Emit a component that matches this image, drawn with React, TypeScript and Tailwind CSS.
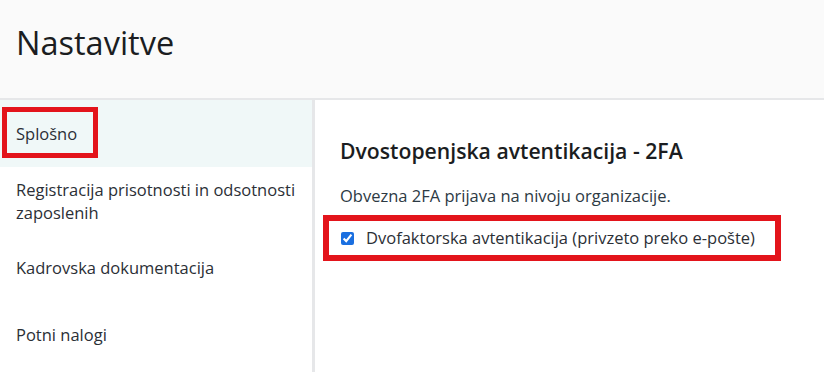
export default function App() {
  const items = [
    "Splošno",
    "Registracija prisotnosti in odsotnosti zaposlenih",
    "Kadrovska dokumentacija",
    "Potni nalogi",
  ];

  return (
    <div className="w-[824px] h-[372px] overflow-hidden bg-white font-['Open_Sans',sans-serif] text-[#2b2f36]">
      {/* Header */}
      <div className="h-[100px] bg-[#fafafa] border-b-2 border-[#e6e7e9] flex items-center px-4">
        <h1 className="text-[32.5px] text-[#1b1d21] leading-none -mt-[12px]">Nastavitve</h1>
      </div>

      <div className="flex h-[272px]">
        {/* Sidebar */}
        <div className="w-[315px] shrink-0 border-r-[3px] border-[#e6e7e9]">
          {items.map((item, i) => (
            <div
              key={item}
              className={`relative h-[67px] flex items-center pl-4 pr-3 text-[16.5px] leading-[23px] ${i === 0 ? "bg-[#f0f8f8]" : ""}`}
            >
              {item}
              {i === 0 && (
                <div className="absolute left-[2px] top-[7px] w-[96px] h-[51px] border-[5px] border-[#e3141b]" />
              )}
            </div>
          ))}
        </div>

        {/* Content */}
        <div className="flex-1 pl-[25px] pt-[37px]">
          <h2 className="text-[21.2px] font-semibold text-[#1b1d21] leading-[28px]">
            Dvostopenjska avtentikacija - 2FA
          </h2>
          <p className="mt-[20px] text-[16.5px] leading-[22px] text-[#2d3a44]">
            Obvezna 2FA prijava na nivoju organizacije.
          </p>
          <div className="relative mt-[20px] flex items-center h-[22px] text-[16.5px]">
            <input type="checkbox" defaultChecked className="w-[13px] h-[13px] ml-[1px] accent-[#1a6fe0]" />
            <span className="ml-[12px]">Dvofaktorska avtentikacija (privzeto preko e-pošte)</span>
            <div className="absolute left-[-17px] top-[-12px] w-[458px] h-[46px] border-[6px] border-[#e3141b]" />
          </div>
        </div>
      </div>
    </div>
  );
}
